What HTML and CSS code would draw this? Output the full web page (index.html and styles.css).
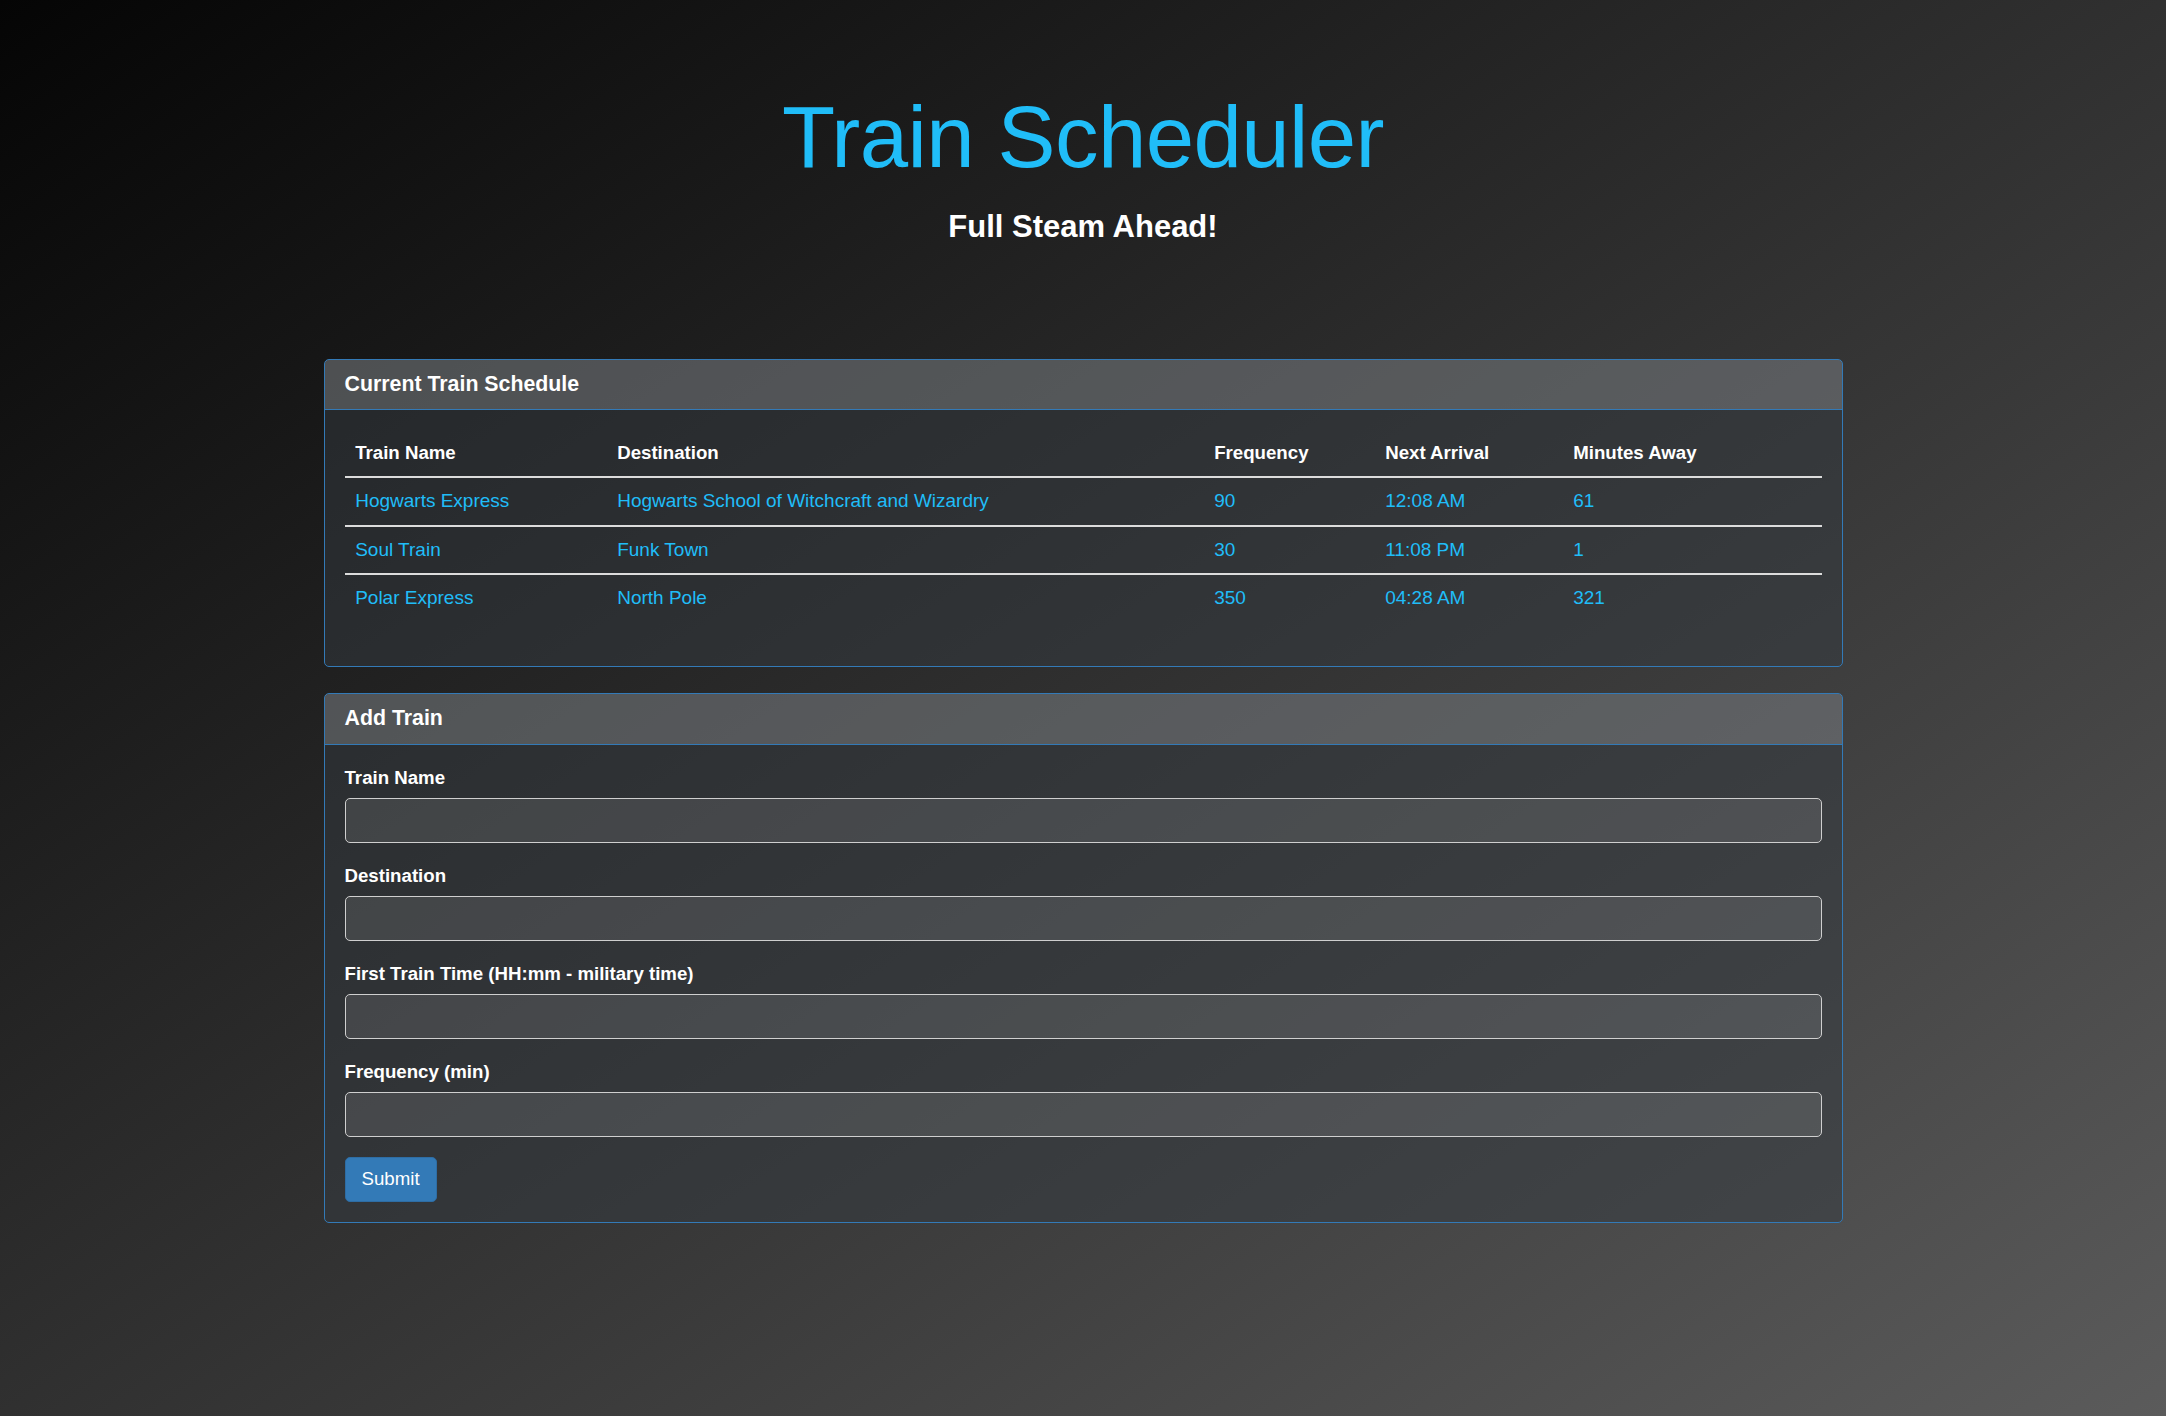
FILE: index.html
```html
<!DOCTYPE html>
<html lang="en">
<head>
<meta charset="utf-8">
<title>Train Scheduler</title>
<link rel="stylesheet" href="styles.css">
</head>
<body>
<div class="page">
  <header class="hero">
    <h1 class="hero-title">Train Scheduler</h1>
    <h3 class="hero-sub">Full Steam Ahead!</h3>
  </header>

  <main class="container">
    <section class="panel panel-schedule">
      <div class="panel-heading"><h3 class="panel-title">Current Train Schedule</h3></div>
      <div class="panel-body">
        <table class="table">
          <colgroup>
            <col class="c1"><col class="c2"><col class="c3"><col class="c4"><col class="c5">
          </colgroup>
          <thead>
            <tr><th>Train Name</th><th>Destination</th><th>Frequency</th><th>Next Arrival</th><th>Minutes Away</th></tr>
          </thead>
          <tbody>
            <tr><td>Hogwarts Express</td><td>Hogwarts School of Witchcraft and Wizardry</td><td>90</td><td>12:08 AM</td><td>61</td></tr>
            <tr><td>Soul Train</td><td>Funk Town</td><td>30</td><td>11:08 PM</td><td>1</td></tr>
            <tr><td>Polar Express</td><td>North Pole</td><td>350</td><td>04:28 AM</td><td>321</td></tr>
          </tbody>
        </table>
      </div>
    </section>

    <section class="panel panel-add">
      <div class="panel-heading"><h3 class="panel-title">Add Train</h3></div>
      <div class="panel-body">
        <form class="form">
          <div class="form-group">
            <label class="label" for="name">Train Name</label>
            <input class="input" id="name" type="text">
          </div>
          <div class="form-group">
            <label class="label" for="dest">Destination</label>
            <input class="input" id="dest" type="text">
          </div>
          <div class="form-group">
            <label class="label" for="first">First Train Time (HH:mm - military time)</label>
            <input class="input" id="first" type="text">
          </div>
          <div class="form-group">
            <label class="label" for="freq">Frequency (min)</label>
            <input class="input" id="freq" type="text">
          </div>
          <button class="btn" type="button">Submit</button>
        </form>
      </div>
    </section>
  </main>
</div>
</body>
</html>
```

FILE: styles.css
```css
html, body {
  margin: 0;
  padding: 0;
}

body {
  min-height: 1416px;
  background: linear-gradient(to bottom right, #050505, #5b5b5b);
  font-family: "Liberation Sans", Arial, Helvetica, sans-serif;
  font-size: 18.67px;
  line-height: 26.67px;
  color: #ffffff;
}

.page {
  padding-top: 89px;
}

.hero {
  text-align: center;
}

.hero-title {
  margin: 0;
  font-size: 87px;
  line-height: 95.7px;
  font-weight: normal;
  letter-spacing: -0.6px;
  color: #20bdf8;
}

.hero-sub {
  margin: 25px 0 0;
  font-size: 31px;
  line-height: 34px;
  font-weight: bold;
  color: #ffffff;
}

.container {
  width: 1519px;
  margin: 115px auto 0;
}

.panel {
  border: 1px solid #337ab7;
  border-radius: 5px;
  background: rgba(52, 58, 64, 0.5);
  margin-bottom: 26.5px;
  overflow: hidden;
}

.panel-heading {
  padding: 13px 20px;
  background: rgba(255, 255, 255, 0.19);
  border-bottom: 1px solid #337ab7;
}

.panel-title {
  margin: 0;
  font-size: 21.33px;
  line-height: 23.5px;
  font-weight: bold;
  color: #ffffff;
}

.panel-body {
  padding: 20px;
}

.table {
  width: 100%;
  table-layout: fixed;
  border-collapse: separate;
  border-spacing: 0;
  margin-bottom: 24px;
}

.c1 { width: 262px; }
.c2 { width: 597px; }
.c3 { width: 171px; }
.c4 { width: 188px; }
.c5 { width: auto; }

.table th {
  text-align: left;
  font-weight: bold;
  color: #ffffff;
  padding: 10px 10.67px 9.5px;
  line-height: 26.67px;
  border-bottom: 2px solid #dcdcdc;
  white-space: nowrap;
}

.table td {
  color: #20bdf8;
  font-size: 19px;
  padding: 9.9px 10.67px;
  line-height: 26.67px;
  border-top: 2px solid #dcdcdc;
  white-space: nowrap;
}

.table tbody tr:first-child td {
  border-top: 0;
}

.form-group {
  margin-bottom: 20px;
}

.label {
  display: block;
  font-weight: bold;
  margin-bottom: 6.67px;
  color: #ffffff;
}

.input {
  display: block;
  box-sizing: border-box;
  width: 100%;
  height: 44.7px;
  margin: 0;
  padding: 8px 16px;
  border: 1px solid #cfcfcf;
  border-radius: 5px;
  background: rgba(255, 255, 255, 0.1);
  color: #ffffff;
  font: inherit;
}

.btn {
  box-sizing: border-box;
  height: 45px;
  padding: 0 16px;
  border: 1px solid #2e6da4;
  border-radius: 5px;
  background: #337ab7;
  color: #ffffff;
  font-family: inherit;
  font-size: 18.67px;
  line-height: 26.67px;
  cursor: pointer;
}
```
